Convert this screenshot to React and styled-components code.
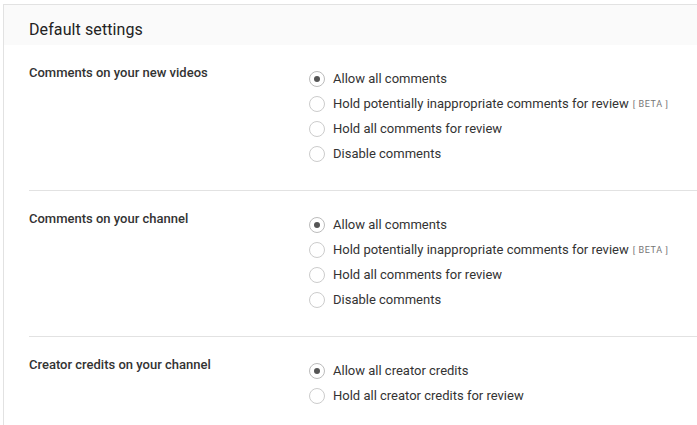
import React from "react";
import styled, { createGlobalStyle } from "styled-components";

const GlobalStyle = createGlobalStyle`
  html, body {
    margin: 0;
    padding: 0;
    background: #fff;
  }
  body {
    font-family: Roboto, "Liberation Sans", Arial, sans-serif;
    color: #333;
  }
`;

const sections = [
  {
    label: "Comments on your new videos",
    options: [
      { text: "Allow all comments", checked: true },
      { text: "Hold potentially inappropriate comments for review", beta: true },
      { text: "Hold all comments for review" },
      { text: "Disable comments" },
    ],
  },
  {
    label: "Comments on your channel",
    options: [
      { text: "Allow all comments", checked: true },
      { text: "Hold potentially inappropriate comments for review", beta: true },
      { text: "Hold all comments for review" },
      { text: "Disable comments" },
    ],
  },
  {
    label: "Creator credits on your channel",
    options: [
      { text: "Allow all creator credits", checked: true },
      { text: "Hold all creator credits for review" },
    ],
  },
];

const App = () => {
  return (
    <>
      <GlobalStyle />
      <Page>
        <Card>
          <Header>
            <h2>Default settings</h2>
          </Header>
          {sections.map((section, i) => (
            <Section key={i} $last={i === sections.length - 1}>
              <Label>{section.label}</Label>
              <Options>
                {section.options.map((opt, j) => (
                  <Option key={j}>
                    <Radio $checked={opt.checked} />
                    <OptionText>{opt.text}</OptionText>
                    {opt.beta && <Beta>[ BETA ]</Beta>}
                  </Option>
                ))}
              </Options>
            </Section>
          ))}
        </Card>
      </Page>
    </>
  );
};

export default App;

const Page = styled.div`
  padding: 4px 0 0 3px;
  height: 425px;
  box-sizing: border-box;
  overflow: hidden;
`;

const Card = styled.div`
  border-top: 1px solid #e2e2e2;
  border-left: 1px solid #e2e2e2;
  width: 740px;
  min-height: 440px;
  background: #fff;
`;

const Header = styled.div`
  background: #fafafa;
  height: 40px;
  padding-left: 25px;
  display: flex;
  align-items: center;
  h2 {
    margin: 0;
    padding-top: 8px;
    font-size: 16px;
    font-weight: 400;
    color: #222;
    letter-spacing: 0.1px;
  }
`;

const Section = styled.div`
  margin-left: 25px;
  display: grid;
  grid-template-columns: 280px 1fr;
  padding: 21px 0 24px;
  border-bottom: ${(p) => (p.$last ? "none" : "1px solid #e2e2e2")};
`;

const Label = styled.div`
  font-size: 13px;
  font-weight: 500;
  line-height: 14px;
  color: #333;
`;

const Options = styled.div`
  display: flex;
  flex-direction: column;
`;

const Option = styled.label`
  display: flex;
  align-items: center;
  height: 25px;
  font-size: 13px;
  color: #333;
  cursor: pointer;
`;

const OptionText = styled.span`
  margin-left: 8px;
`;

const Radio = styled.span`
  width: 14px;
  height: 14px;
  border-radius: 50%;
  border: 1px solid ${(p) => (p.$checked ? "#bcbcbc" : "#cccccc")};
  background: #fff;
  display: flex;
  align-items: center;
  justify-content: center;
  flex-shrink: 0;
  &::after {
    content: "";
    width: 6px;
    height: 6px;
    border-radius: 50%;
    background: ${(p) => (p.$checked ? "#555" : "transparent")};
  }
`;

const Beta = styled.span`
  font-size: 9px;
  color: #767676;
  letter-spacing: 0.6px;
  margin-left: 4px;
  padding-top: 1px;
`;
